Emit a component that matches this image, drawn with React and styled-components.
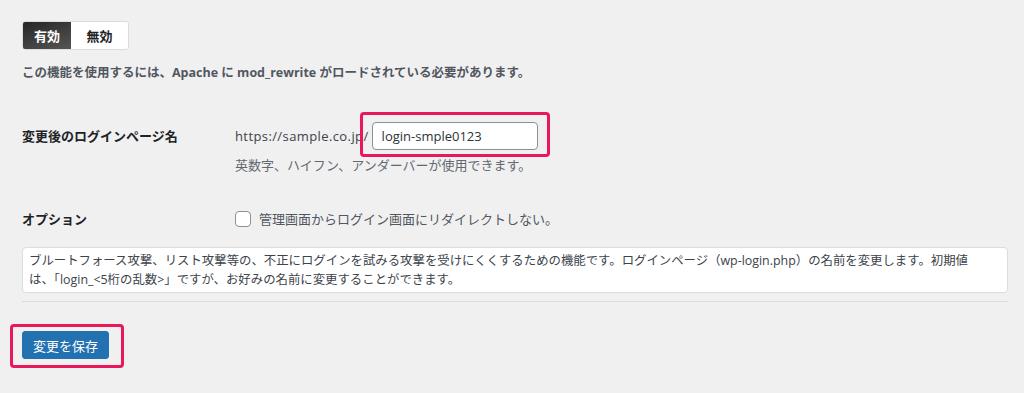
import React from 'react';
import styled, { createGlobalStyle } from 'styled-components';

const GlobalStyle = createGlobalStyle`
  body {
    margin: 0;
    background: #f0f0f1;
    font-family: "Open Sans", "Noto Sans CJK JP", sans-serif;
    color: #1d2327;
  }
`;

const Page = styled.div`
  padding: 21px 16px 0 22px;
  height: 393px;
  box-sizing: border-box;
`;

const ToggleGroup = styled.div`
  display: inline-flex;
  height: 29px;
  border-radius: 3px;
  overflow: hidden;
  border: 1px solid #dcdcde;
  box-sizing: border-box;
`;

const ToggleButton = styled.button`
  border: none;
  margin: 0;
  font-family: inherit;
  font-size: 13px;
  font-weight: 700;
  padding: 0;
  width: ${p => (p.$active ? '48px' : '57px')};
  color: ${p => (p.$active ? '#fff' : '#1d2327')};
  background: ${p => (p.$active ? 'linear-gradient(160deg, #262626, #555)' : '#fff')};
`;

const Notice = styled.p`
  margin: 13px 0 0;
  font-size: 12.5px;
  line-height: 20px;
  font-weight: 700;
  color: #50575e;
`;

const FormGrid = styled.div`
  display: grid;
  grid-template-columns: 213px 1fr;
  row-gap: 34px;
  margin-top: 39px;
`;

const Label = styled.div`
  font-size: 13px;
  font-weight: 700;
  line-height: ${p => p.$lh || 28}px;
  color: #1d2327;
`;

const Field = styled.div`
  display: flex;
  flex-direction: column;
`;

const UrlLine = styled.div`
  display: flex;
  align-items: center;
  gap: 3px;
  font-size: 13px;
  color: #3c434a;
`;

const UrlPrefix = styled.span`
  letter-spacing: 0.4px;
`;

const Highlight = styled.span`
  position: relative;
  display: inline-flex;

  &::after {
    content: '';
    position: absolute;
    left: -12px;
    right: -12px;
    top: -10px;
    bottom: -7px;
    border: 3px solid #e8185a;
    border-radius: 4px;
    pointer-events: none;
  }
`;

const TextInput = styled.input`
  width: 166px;
  height: 28px;
  box-sizing: border-box;
  border: 1px solid #8c8f94;
  border-radius: 4px;
  padding: 0 9px;
  font-family: inherit;
  font-size: 13px;
  color: #2c3338;
  background: #fff;
  outline: none;
`;

const Hint = styled.div`
  margin-top: 5px;
  font-size: 13px;
  line-height: 20px;
  color: #646970;
`;

const CheckLine = styled.label`
  display: flex;
  align-items: center;
  gap: 8px;
  font-size: 13px;
  line-height: 20px;
  color: #50575e;
`;

const CheckBox = styled.span`
  width: 16px;
  height: 16px;
  box-sizing: border-box;
  border: 1px solid #8c8f94;
  border-radius: 4px;
  background: #fff;
  flex: none;
`;

const Description = styled.div`
  margin-top: 18px;
  background: #fff;
  border: 1px solid #dcdcde;
  border-radius: 4px;
  padding: 3px 6px;
  font-size: 12.4px;
  line-height: 19px;
  color: #3c434a;
  white-space: nowrap;
`;

const Separator = styled.hr`
  margin: 8px 0 0;
  border: none;
  border-top: 1px solid #dcdcde;
`;

const SubmitWrap = styled.div`
  margin-top: 29px;
  display: flex;
`;

const SaveButton = styled.button`
  position: relative;
  height: 28px;
  padding: 0 10px;
  border: 1px solid #2271b1;
  border-radius: 3px;
  background: #2271b1;
  color: #fff;
  font-family: inherit;
  font-size: 13px;
  white-space: nowrap;

  &::after {
    content: '';
    position: absolute;
    left: -13px;
    right: -16px;
    top: -8px;
    bottom: -10px;
    border: 3px solid #e8185a;
    border-radius: 4px;
    pointer-events: none;
  }
`;

export default function App() {
  return (
    <>
      <GlobalStyle />
      <Page>
        <ToggleGroup>
          <ToggleButton $active>有効</ToggleButton>
          <ToggleButton>無効</ToggleButton>
        </ToggleGroup>
        <Notice>この機能を使用するには、Apache に mod_rewrite がロードされている必要があります。</Notice>

        <FormGrid>
          <Label>変更後のログインページ名</Label>
          <Field>
            <UrlLine>
              <UrlPrefix>https://sample.co.jp/</UrlPrefix>
              <Highlight>
                <TextInput defaultValue="login-smple0123" />
              </Highlight>
            </UrlLine>
            <Hint>英数字、ハイフン、アンダーバーが使用できます。</Hint>
          </Field>

          <Label $lh={20}>オプション</Label>
          <CheckLine>
            <CheckBox />
            管理画面からログイン画面にリダイレクトしない。
          </CheckLine>
        </FormGrid>

        <Description>
          ブルートフォース攻撃、リスト攻撃等の、不正にログインを試みる攻撃を受けにくくするための機能です。ログインページ（wp-login.php）の名前を変更します。初期値
          <br />
          は、「login_&lt;5桁の乱数&gt;」ですが、お好みの名前に変更することができます。
        </Description>
        <Separator />

        <SubmitWrap>
          <SaveButton>変更を保存</SaveButton>
        </SubmitWrap>
      </Page>
    </>
  );
}
